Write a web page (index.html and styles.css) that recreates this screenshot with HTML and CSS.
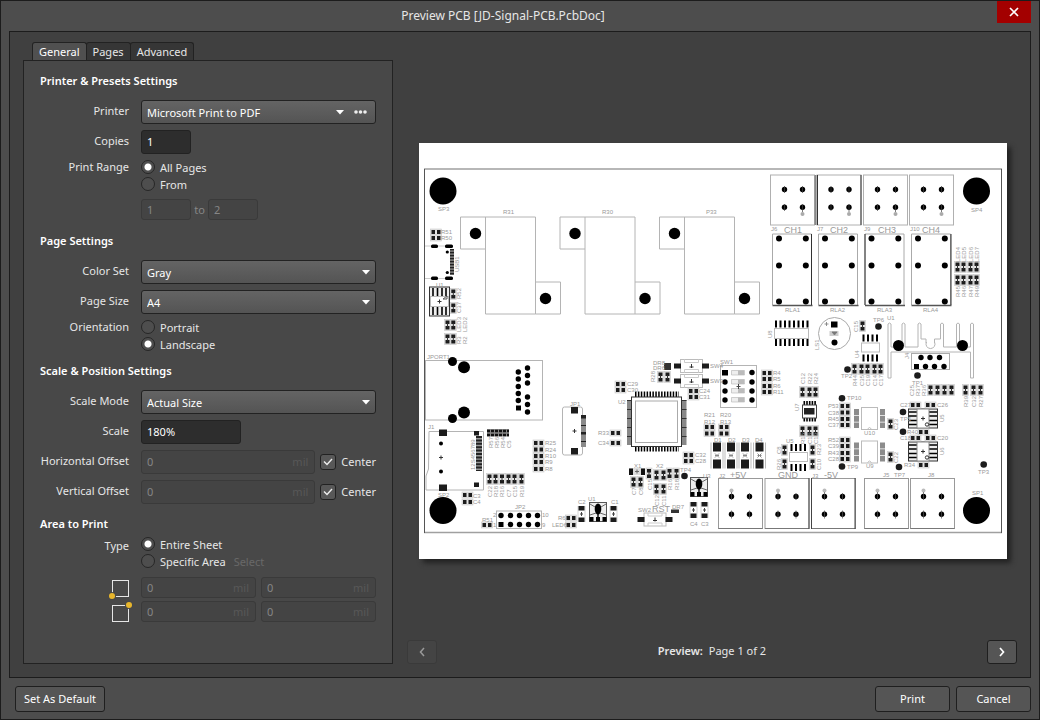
FILE: index.html
```html
<!DOCTYPE html>
<html lang="en">
<head>
<meta charset="utf-8">
<title>Preview PCB [JD-Signal-PCB.PcbDoc]</title>
<link rel="stylesheet" href="styles.css">
</head>
<body>
<div class="dialog">
  <header class="titlebar">
    <h1 class="title">Preview PCB [JD-Signal-PCB.PcbDoc]</h1>
    <button class="close" type="button" aria-label="Close"><svg width="10" height="10" viewBox="0 0 10 10"><path d="M1 1l8 8M9 1l-8 8" stroke="#fff" stroke-width="1.7"/></svg></button>
  </header>

  <main class="content">
    <form class="settings">
      <div class="tabs" role="tablist">
        <button class="tab active" type="button" role="tab" aria-selected="true">General</button>
        <button class="tab" type="button" role="tab" aria-selected="false">Pages</button>
        <button class="tab" type="button" role="tab" aria-selected="false">Advanced</button>
      </div>
      <div class="panel">
        <section class="section">
          <h2 class="heading">Printer &amp; Presets Settings</h2>
          <div class="rows">
            <label class="label" for="printer">Printer</label>
            <div class="combo with-more">
              <select id="printer" class="select"><option>Microsoft Print to PDF</option></select>
              <svg class="caret" width="8" height="5" viewBox="0 0 8 5"><path d="M0 0h8L4 4.5z" fill="#fff"/></svg>
              <button class="more" type="button" aria-label="Printer options"><svg width="13" height="4" viewBox="0 0 13 4"><g fill="#eee"><circle cx="2" cy="2" r="1.8"/><circle cx="6.5" cy="2" r="1.8"/><circle cx="11" cy="2" r="1.8"/></g></svg></button>
            </div>
            <label class="label" for="copies">Copies</label>
            <input id="copies" class="field w50" value="1">
            <span class="label top" id="range">Print Range</span>
            <div class="radios" role="radiogroup" aria-labelledby="range">
              <label class="choice"><input class="radio" type="radio" name="range" checked>All Pages</label>
              <label class="choice"><input class="radio" type="radio" name="range">From</label>
              <div class="fromto">
                <input class="field low w50" value="1" aria-label="From page" disabled>
                <span>to</span>
                <input class="field low w50" value="2" aria-label="To page" disabled>
              </div>
            </div>
          </div>
        </section>

        <section class="section">
          <h2 class="heading">Page Settings</h2>
          <div class="rows">
            <label class="label" for="colorset">Color Set</label>
            <div class="combo"><select id="colorset" class="select"><option>Gray</option></select><svg class="caret" width="8" height="5" viewBox="0 0 8 5"><path d="M0 0h8L4 4.5z" fill="#fff"/></svg></div>
            <label class="label" for="pagesize">Page Size</label>
            <div class="combo"><select id="pagesize" class="select"><option>A4</option></select><svg class="caret" width="8" height="5" viewBox="0 0 8 5"><path d="M0 0h8L4 4.5z" fill="#fff"/></svg></div>
            <span class="label top" id="orient">Orientation</span>
            <div class="radios" role="radiogroup" aria-labelledby="orient">
              <label class="choice"><input class="radio" type="radio" name="orient">Portrait</label>
              <label class="choice"><input class="radio" type="radio" name="orient" checked>Landscape</label>
            </div>
          </div>
        </section>

        <section class="section close-up">
          <h2 class="heading">Scale &amp; Position Settings</h2>
          <div class="rows">
            <label class="label" for="mode">Scale Mode</label>
            <div class="combo"><select id="mode" class="select"><option>Actual Size</option></select><svg class="caret" width="8" height="5" viewBox="0 0 8 5"><path d="M0 0h8L4 4.5z" fill="#fff"/></svg></div>
            <label class="label" for="scale">Scale</label>
            <input id="scale" class="field w100" value="180%">
            <label class="label" for="hoff">Horizontal Offset</label>
            <div class="offset">
              <div class="unit-field"><input id="hoff" class="field" value="0" disabled><span class="unit">mil</span></div>
              <label class="center"><input class="check" type="checkbox" checked><svg class="tick" width="10" height="8" viewBox="0 0 10 8"><path d="M1 3.5l3 3L9 1" fill="none" stroke="#eee" stroke-width="1.4"/></svg>Center</label>
            </div>
            <label class="label" for="voff">Vertical Offset</label>
            <div class="offset">
              <div class="unit-field"><input id="voff" class="field" value="0" disabled><span class="unit">mil</span></div>
              <label class="center"><input class="check" type="checkbox" checked><svg class="tick" width="10" height="8" viewBox="0 0 10 8"><path d="M1 3.5l3 3L9 1" fill="none" stroke="#eee" stroke-width="1.4"/></svg>Center</label>
            </div>
          </div>
        </section>

        <section class="section close-up area">
          <h2 class="heading">Area to Print</h2>
          <div class="rows">
            <span class="label type" id="type">Type</span>
            <div class="radios" role="radiogroup" aria-labelledby="type">
              <label class="choice"><input class="radio" type="radio" name="area" checked>Entire Sheet</label>
              <div class="specific">
                <label class="choice"><input class="radio" type="radio" name="area">Specific Area</label>
                <button class="pick" type="button" disabled>Select</button>
              </div>
            </div>
          </div>
          <div class="corners">
            <svg class="corner" width="22" height="45" viewBox="0 0 22 45">
              <rect x="4.5" y="3.5" width="16" height="16" fill="none" stroke="#e6e6e6"/>
              <circle cx="4" cy="19" r="4" fill="#484848"/><circle cx="4" cy="19" r="3" fill="#e8b62c"/>
              <rect x="4.5" y="28.5" width="16" height="16" fill="none" stroke="#e6e6e6"/>
              <circle cx="21" cy="28" r="4" fill="#484848"/><circle cx="21" cy="28" r="3" fill="#e8b62c"/>
            </svg>
            <div class="coords">
              <div class="unit-field"><input class="field low" value="0" aria-label="Lower left X" disabled><span class="unit">mil</span></div>
              <div class="unit-field"><input class="field low" value="0" aria-label="Lower left Y" disabled><span class="unit">mil</span></div>
              <div class="unit-field"><input class="field low" value="0" aria-label="Upper right X" disabled><span class="unit">mil</span></div>
              <div class="unit-field"><input class="field low" value="0" aria-label="Upper right Y" disabled><span class="unit">mil</span></div>
            </div>
          </div>
        </section>
      </div>
    </form>

    <section class="preview">
      <div class="stage">
        <svg class="sheet" viewBox="419 143 588 416" role="img" aria-label="Board preview">
          <defs>
            <g id="rv"><rect x="-3" y="-5.5" width="6" height="11" fill="#e4e4e4" stroke="#c8c8c8" stroke-width=".6"/><path d="M-2-4.500h4v3.500h-4zM-2 1h4v3.500h-4z" fill="#1c1c1c"/><path d="M0-2v4" stroke="#333"/></g>
            <g id="rh"><rect x="-5.5" y="-3" width="11" height="6" fill="#e4e4e4" stroke="#c8c8c8" stroke-width=".6"/><path d="M-4.500-2h3.500v4h-3.500zM1-2h3.500v4H1z" fill="#1c1c1c"/></g>
            <g id="cap"><path d="M-3.500-8v16M3.500-8v16" stroke="#ccc" stroke-width=".8"/><path d="M-3-8h6v4.500h-6zM-3 3.500h6V8h-6z" fill="#1c1c1c"/><path d="M-1.500 0h3M0-2v4" stroke="#444"/></g>
            <g id="shunt" stroke="#b4b4b4" stroke-width="1"><path d="M.500 0h75v97h-50V0M.500 0v32h25M75.500 65h25v32h-25" fill="none"/><g fill="#000" stroke="none"><circle cx="15.500" cy="16.500" r="5.7"/><circle cx="85.500" cy="81.500" r="5.7"/></g></g>
            <g id="pins4"><circle cx="14" cy="14.500" r="2.700"/><circle cx="32" cy="14.500" r="2.700"/><circle cx="14" cy="32.300" r="2.700"/><circle cx="32" cy="32.300" r="2.700"/></g>
            <g id="term"><rect width="44" height="50" fill="none" stroke="#b0b0b0"/><use href="#pins4"/><circle cx="32" cy="39" r="2" fill="#aaa"/><path d="M14 11v7M32 11v7M14 29v7M32 29v8" stroke="#444" stroke-width=".7"/></g>
            <g id="termb"><rect width="44" height="50" fill="none" stroke="#999"/><path d="M0 50h44" stroke="#777"/><use href="#pins4" x="-1" y="3.500"/><circle cx="13" cy="12" r="2" fill="#bbb"/><path d="M13 13.500v8M13 32v8M31 14.500v7M31 32v8" stroke="#555" stroke-width=".7"/></g>
            <g id="relay"><path d="M0 71V0h39v71" fill="none" stroke="#aaa"/><path d="M0 71.500h40" stroke="#555" stroke-width="1.500"/><circle cx="6.500" cy="4.500" r="3"/><circle cx="33.300" cy="4.500" r="3"/><circle cx="6.500" cy="31.500" r="3"/><circle cx="33.300" cy="31.500" r="3"/><circle cx="6.500" cy="67.500" r="3"/><circle cx="33.300" cy="67.500" r="3"/></g>
            <g id="so8"><path d="M-7-13v7M-2.500-13v7M2-13v7M6.500-13v7M-7 14v-7M-2.500 14v-7M2 14v-7M6.500 14v-7" stroke="#000" stroke-width="2"/><rect x="-9" y="-4.500" width="18" height="9" fill="#fff" stroke="#bbb"/></g>
            <g id="sot"><rect x="-8.500" y="-9.500" width="17" height="19" fill="#eee" stroke="#555"/><ellipse cy="-3" rx="3.300" ry="5.500"/><path d="M-8.500 5h4v4.500h-4zM-2 5h4v4.500h-4zM4.500 5h4v4.500h-4zM-.700 0h1.400v6h-1.400z"/><path d="M-8-8l5 3M8-8l-5 3M-8 3l6-2M8 3L2 1" stroke="#666"/></g>
            <g id="button"><rect x="-11" y="-6.500" width="22" height="13" fill="#fff" stroke="#bbb"/><path d="M-7-6.500v3H7v-3M-7 6.500v-3H7v3" fill="none" stroke="#ccc"/><path d="M-17.500-2.500h7v5h-7zM10.500-2.500h7v5h-7z" fill="#1c1c1c"/><path d="M-2 1h4M0-2v4" stroke="#333"/></g>
            <g id="diode"><path d="M-6-13v26M6-13v26" stroke="#bbb"/><path d="M-4-13h8v9h-8zM-4 4h8v9h-8z" fill="#1c1c1c"/><path d="M-2-2l4 4M2-2l-4 4M-2 0h4" stroke="#888"/></g>
            <g id="opto"><rect x="-8" y="-11" width="16" height="22" fill="#fff" stroke="#bbb"/><path d="M-2 10.500q2-3 4 0" fill="none" stroke="#bbb"/><path d="M-13-9.500v19M13-9.500v19" stroke="#8c8c8c" stroke-width="5" stroke-dasharray="6 .8"/></g>
            <g id="amp"><rect x="-14.500" y="-9.500" width="29" height="19" fill="#eee" stroke="#333"/><path d="M-14-6.500h8M-14-2.500h8M-14 2h8M-14 6h8M6-6.500h8M6-2.500h8M6 2h8M6 6h8" stroke="#000" stroke-width="1.400"/><rect x="-6" y="-9.500" width="12" height="19" fill="#fff" stroke="#888"/><path d="M-2 0h4M0-2v4" stroke="#333"/><circle cx="4" cy="6" r="1.700" fill="none" stroke="#333"/></g>
            <circle id="tp" r="3.300" fill="#1c1c1c"/>
            <circle id="pin" r="2.700"/>
            <circle id="hole" r="13.500"/>
          </defs>
          <rect x="419" y="143" width="588" height="416" fill="#fff"/>
          <path d="M424 169h578M424 532.500h578" stroke="#a0a0a0" stroke-width="1.600"/>
          <path d="M424.500 169v364M1001.500 169v364" stroke="#555"/>
          <use href="#hole" x="443" y="191"/><use href="#hole" x="976.500" y="191"/><use href="#hole" x="443" y="510.500"/><use href="#hole" x="976.500" y="510.500"/>
          <use href="#shunt" x="460" y="217"/><use href="#shunt" x="559.500" y="217"/><use href="#shunt" x="659" y="217"/>

          <g><use href="#term" x="770.500" y="175"/><use href="#term" x="817" y="175"/><use href="#term" x="863.500" y="175"/><use href="#term" x="909.500" y="175"/>
          <path d="M815.500 175v50" stroke="#888" stroke-width="2"/><path d="M817.500 175v50M861 175v50" stroke="#333"/></g>
          <g><use href="#relay" x="772.500" y="234"/><use href="#relay" x="818.500" y="234"/><use href="#relay" x="865" y="234"/><use href="#relay" x="911.500" y="234"/>
          <path d="M811.500 234v71M865 234v71M951 234v71" stroke="#333"/></g>
          <g><use href="#termb" x="718.500" y="478.500"/><use href="#termb" x="765" y="478.500"/><use href="#termb" x="811.500" y="478.500"/><use href="#termb" x="864.500" y="478.500"/><use href="#termb" x="910.500" y="478.500"/>
          <path d="M809 478v51M811.500 478v51M855 478v51" stroke="#444"/></g>

          <!-- USB connector -->
          <path d="M425 246h28M425 278.500h28" stroke="#ccc"/>
          <g><rect x="431" y="244.500" width="7" height="3.500" rx="1.500"/><rect x="445" y="244.500" width="8" height="3.500" rx="1.500"/><rect x="431" y="276.500" width="7" height="3.500" rx="1.500"/><rect x="445" y="276.500" width="8" height="3.500" rx="1.500"/><circle cx="447.300" cy="252" r="1.600"/><circle cx="447.300" cy="272.500" r="1.600"/></g>
          <path d="M452 249v26" stroke="#777" stroke-width="4"/><path d="M452 249v26" stroke="#222" stroke-width="4" stroke-dasharray="1.200 1.800"/>
          <rect x="429.500" y="287" width="20" height="29" fill="#eee" stroke="#333"/>
          <path d="M433 288v8M437.500 288v8M442 288v8M446 288v8M433 307v8M437.500 307v8M442 307v8M446 307v8" stroke="#000" stroke-width="1.600"/>
          <rect x="430.500" y="296.500" width="18" height="10" fill="#fff" stroke="#bbb"/><path d="M437.500 301.500h4M439.500 299.500v4" stroke="#333"/><path d="M443 299h4v-3z" fill="none" stroke="#555"/>

          <!-- Ethernet jack -->
          <rect x="425.500" y="360.500" width="117" height="59.500" fill="none" stroke="#b4b4b4"/>
          <circle cx="452.500" cy="361.500" r="4.500"/><circle cx="464" cy="367.300" r="6"/><circle cx="464" cy="412.500" r="6"/><circle cx="452.500" cy="418.500" r="4.500"/>
          <path d="M516 405.500h5v5h-5z"/><use href="#pin" x="518.300" y="372"/><use href="#pin" x="518.300" y="379"/><use href="#pin" x="518.300" y="386.500"/><use href="#pin" x="518.300" y="393.500"/><use href="#pin" x="518.300" y="400.500"/>
          <use href="#pin" x="527.500" y="368"/><use href="#pin" x="527.500" y="375.500"/><use href="#pin" x="527.500" y="383"/><use href="#pin" x="527.500" y="397"/><use href="#pin" x="527.500" y="404.500"/><use href="#pin" x="527.500" y="412"/>

          <!-- Card slot -->
          <path d="M429 431.500h54.500V490H426v-14l2.500-7z" fill="none" stroke="#b4b4b4"/>
          <path d="M439 429.500h8v6.500h-8zM474 431h5v4.500h-5zM439 484.500h8v6.500h-8zM474 482.500h5v4.500h-5z" fill="#1c1c1c"/>
          <circle cx="441" cy="443.500" r="2"/><circle cx="441" cy="471.500" r="2"/><path d="M439 457.500h4M441 455.500v4" stroke="#333"/>
          <path d="M479 436v35" stroke="#999" stroke-width="6"/><path d="M479 436v35" stroke="#222" stroke-width="6" stroke-dasharray="2 1.400"/>
          <path d="M487 429h22v7.500h-22z" fill="#888"/><path d="M487 431h22M487 435h22" stroke="#111" stroke-width="2.600" stroke-dasharray="3 1"/>

          <!-- Side header -->
          <rect x="562.500" y="407" width="20" height="48" rx="2" fill="none" stroke="#b4b4b4"/><path d="M571 407h7v6.500h-7zM571 448h7v6.500h-7z" fill="#1c1c1c"/>
          <path d="M581 415h5v32h-5z" fill="#8a8a8a"/><path d="M581 415h5v3.500h-5zM581 425h5v1h-5zM581 432h5v2.500h-5zM581 441h5v1h-5z" fill="#222"/><path d="M572.500 431h4M574.500 429v4" stroke="#333"/>
          <rect x="496.500" y="511" width="45" height="17.500" fill="none" stroke="#b4b4b4"/>
          <g><use href="#pin" x="501" y="515.500"/><use href="#pin" x="510.500" y="515.500"/><use href="#pin" x="519.500" y="515.500"/><use href="#pin" x="528.500" y="515.500"/><use href="#pin" x="537.500" y="515.500"/><path d="M498.500 522h5v5h-5z"/><use href="#pin" x="510.500" y="524.500"/><use href="#pin" x="519.500" y="524.500"/><use href="#pin" x="528.500" y="524.500"/><use href="#pin" x="537.500" y="524.500"/></g>

          <!-- Microcontroller -->
          <path d="M635 394.500h44M635 448.500h44" stroke="#000" stroke-width="6" stroke-dasharray="1.500 1.400"/>
          <path d="M629.500 400v45M684 400v45" stroke="#888" stroke-width="5"/><path d="M629.500 400v45M684 400v45" stroke="#333" stroke-width="5" stroke-dasharray="1 8"/>
          <rect x="631.500" y="397" width="50" height="49.500" fill="#fff" stroke="#333"/><rect x="635.500" y="401" width="42" height="41.500" fill="none" stroke="#aaa"/>

          <use href="#button" x="691.500" y="366"/><use href="#button" x="691.500" y="381"/><use href="#button" x="655" y="519.500"/>
          <use href="#sot" x="598" y="512"/><use href="#sot" x="699" y="487"/>
          <use href="#cap" x="581.500" y="514"/><use href="#cap" x="613.500" y="514"/><use href="#cap" x="693.500" y="510"/><use href="#cap" x="704.500" y="510"/>

          <!-- DIP switch -->
          <rect x="720.500" y="365.500" width="36" height="42" fill="none" stroke="#b4b4b4"/>
          <path d="M722 370h6v5.500h-6z"/><use href="#pin" x="725" y="382"/><use href="#pin" x="725" y="391"/><use href="#pin" x="725" y="400"/><use href="#pin" x="752" y="372.500"/><use href="#pin" x="752" y="382"/><use href="#pin" x="752" y="391"/><use href="#pin" x="752" y="400"/>
          <g fill="#eee" stroke="#bbb" stroke-width=".7"><path d="M731.500 370.500h13v4.500h-13zM731.500 379.500h13v4.500h-13zM731.500 388.500h13v4.500h-13zM731.500 397.500h13v4.500h-13z"/></g><path d="M738 370.500h6v4.500h-6zM738 379.500h6v4.500h-6zM738 388.500h6v4.500h-6zM738 397.500h6v4.500h-6z" fill="#bbb"/><path d="M736.500 386.500h4M738.500 384v5" stroke="#444"/>

          <use href="#diode" x="717" y="455.500"/><use href="#diode" x="731" y="455.500"/><use href="#diode" x="745" y="455.500"/><use href="#diode" x="759.500" y="455.500"/>

          <!-- Shift register and buzzer -->
          <path d="M775 324h34M775 342.500h34" stroke="#000" stroke-width="7" stroke-dasharray="2 2.500"/><rect x="774.500" y="328.500" width="34" height="10" fill="#fff" stroke="#bbb"/>
          <circle cx="834.500" cy="333.500" r="16" fill="none" stroke="#aaa"/><path d="M831 321.500h6.500v6h-6.500z"/><circle cx="834.500" cy="342.500" r="3"/><path d="M829.500 331h9v5h-9z" fill="#ccc"/><path d="M832 332h5l-2.500 3zM824.500 324h4M826.500 322v4" stroke="#777" fill="#777" stroke-width=".8"/>
          <use href="#so8" x="870.500" y="347.500"/><use href="#so8" x="798.500" y="457"/>

          <!-- Heat sink and D-sub header -->
          <path d="M888 378V324q1.500-2 3 0v23h11v-23q1.500-2 3 0v23h13v-23q1.500-2 3 0v15h5v4M973.500 378V324q-1.500-2-3 0v23h-11v-23q-1.500-2-3 0v23h-13v-23q-1.500-2-3 0v15h-6v4M926.500 342a4.500 4.500 0 1 0 8 0M888 378h3v-26h79.500v26h3" fill="none" stroke="#b4b4b4"/>
          <circle cx="898.500" cy="345.500" r="5.500"/><circle cx="962.500" cy="345.500" r="5.500"/>
          <rect x="911.500" y="353.500" width="38" height="16" fill="#fff" stroke="#aaa"/><use href="#pin" x="921" y="357.500"/><use href="#pin" x="930" y="357.500"/><use href="#pin" x="939.500" y="357.500"/><path d="M914 364h5v5h-5z"/><use href="#pin" x="925.500" y="366.500"/><use href="#pin" x="934.500" y="366.500"/><use href="#pin" x="944" y="366.500"/>

          <path d="M803.500 403.500h13M803.500 419h13" stroke="#000" stroke-width="5" stroke-dasharray="1.600 1.100"/><rect x="802.500" y="405" width="14" height="13" fill="#fff" stroke="#444"/><path d="M804 408h10.500v6.500H804z" fill="#222"/>
          <use href="#opto" x="869.500" y="418.500"/><use href="#opto" x="869.500" y="452"/>
          <use href="#amp" x="923" y="418.500"/><use href="#amp" x="923" y="451.500"/>

          <g><use href="#tp" x="878.500" y="326.500"/><use href="#tp" x="847.500" y="369.500"/><use href="#tp" x="917.500" y="375.500"/><use href="#tp" x="842" y="398.300"/><use href="#tp" x="903" y="412"/><use href="#tp" x="903" y="431.700"/><use href="#tp" x="842" y="466.500"/><use href="#tp" x="899" y="467"/><use href="#tp" x="983.700" y="464.500"/><use href="#tp" x="684.500" y="476"/></g>

          <!-- Upright passives -->
          <g><use href="#rv" x="453.300" y="294"/><use href="#rv" x="453.300" y="308"/><use href="#rv" x="447.500" y="325"/><use href="#rv" x="453.300" y="325"/><use href="#rv" x="447.500" y="339"/><use href="#rv" x="453.300" y="339"/>
          <use href="#rv" x="489.500" y="479"/><use href="#rv" x="495.500" y="479"/><use href="#rv" x="502" y="479"/><use href="#rv" x="508.500" y="479"/><use href="#rv" x="514.500" y="479"/><use href="#rv" x="521.500" y="479"/>
          <use href="#rv" x="660.500" y="377"/><use href="#rv" x="667.500" y="377"/><use href="#rv" x="633.500" y="482"/><use href="#rv" x="640.500" y="482"/><use href="#rv" x="649" y="473.500"/><use href="#rv" x="656.500" y="475"/><use href="#rv" x="663.500" y="475"/><use href="#rv" x="669.500" y="473.500"/><use href="#rv" x="676.500" y="473.500"/><use href="#rv" x="656.500" y="489"/><use href="#rv" x="663.500" y="489"/>
          <use href="#rv" x="957.500" y="267"/><use href="#rv" x="963.500" y="267"/><use href="#rv" x="970.500" y="267"/><use href="#rv" x="976.500" y="267"/><use href="#rv" x="957.500" y="280"/><use href="#rv" x="963.500" y="280"/><use href="#rv" x="970.500" y="280"/><use href="#rv" x="976.500" y="280"/><use href="#rv" x="862.500" y="326"/>
          <use href="#rv" x="854.500" y="369"/><use href="#rv" x="861.500" y="369"/><use href="#rv" x="867.500" y="369"/><use href="#rv" x="874.500" y="369"/><use href="#rv" x="880.500" y="369"/>
          <use href="#rv" x="930.500" y="390"/><use href="#rv" x="937.500" y="390"/><use href="#rv" x="944.500" y="390"/><use href="#rv" x="951.500" y="390"/><use href="#rv" x="965.500" y="390"/><use href="#rv" x="973.500" y="390"/><use href="#rv" x="980.500" y="390"/>
          <use href="#rv" x="802.500" y="392"/><use href="#rv" x="809.500" y="392"/><use href="#rv" x="815.500" y="392"/><use href="#rv" x="802.500" y="431"/><use href="#rv" x="809.500" y="431"/><use href="#rv" x="815.500" y="431"/>
          <use href="#rv" x="784.500" y="450"/><use href="#rv" x="784.500" y="464"/><use href="#rv" x="812.500" y="450"/><use href="#rv" x="812.500" y="464"/><use href="#rv" x="890.500" y="424"/><use href="#rv" x="890.500" y="457"/></g>

          <!-- Flat passives -->
          <g><use href="#rh" x="436" y="232"/><use href="#rh" x="436" y="238"/><use href="#rh" x="538.500" y="443"/><use href="#rh" x="538.500" y="449.500"/><use href="#rh" x="538.500" y="456"/><use href="#rh" x="538.500" y="462"/><use href="#rh" x="538.500" y="469"/>
          <use href="#rh" x="467.500" y="495"/><use href="#rh" x="467.500" y="502"/><use href="#rh" x="487" y="525"/><use href="#rh" x="571" y="518"/><use href="#rh" x="571" y="525"/>
          <use href="#rh" x="620.500" y="384"/><use href="#rh" x="620.500" y="390"/><use href="#rh" x="693.500" y="391"/><use href="#rh" x="693.500" y="397"/><use href="#rh" x="615.500" y="433"/><use href="#rh" x="615.500" y="443"/>
          <use href="#rh" x="767" y="373"/><use href="#rh" x="767" y="379"/><use href="#rh" x="767" y="386"/><use href="#rh" x="767" y="392"/><use href="#rh" x="709.500" y="427"/><use href="#rh" x="709.500" y="433.500"/><use href="#rh" x="724" y="427"/><use href="#rh" x="724" y="433.500"/><use href="#rh" x="688.500" y="455"/><use href="#rh" x="688.500" y="461"/>
          <use href="#rh" x="845" y="406"/><use href="#rh" x="845" y="412.500"/><use href="#rh" x="845" y="419"/><use href="#rh" x="845" y="425"/><use href="#rh" x="845" y="440"/><use href="#rh" x="845" y="446"/><use href="#rh" x="845" y="453"/><use href="#rh" x="845" y="459"/>
          <use href="#rh" x="915.500" y="405"/><use href="#rh" x="930.500" y="405"/><use href="#rh" x="923.500" y="432"/><use href="#rh" x="915.500" y="438"/><use href="#rh" x="930.500" y="438"/><use href="#rh" x="923.500" y="465"/></g>
          <path d="M664 363h7v7h-7zM671 509.500h8v3.500h-8z" fill="#333"/><path d="M629 468h16v7h-16z" fill="#ddd"/><path d="M629 468.500h4v6.500h-4zM641 468.500h4v6.500h-4z" fill="#111"/><path d="M635 471.500h4M637 469.500v4" stroke="#666"/>

          <!-- Silkscreen -->
          <g class="silk">
            <text x="438" y="211">SP3</text><text x="971" y="212">SP4</text><text x="972" y="495">SP1</text><text x="438" y="497">SP2</text>
            <text x="503" y="214">R31</text><text x="602" y="214">R30</text><text x="706" y="214">P33</text>
            <text x="441" y="234">R51</text><text x="441" y="240">R50</text><text x="436" y="287">U1</text>
            <text x="427" y="359">JPORT1</text><text x="428" y="429">J1</text><text x="570" y="406">JP1</text><text x="515" y="509">JP2</text>
            <text x="545" y="445">R25</text><text x="545" y="452">R24</text><text x="545" y="458">R10</text><text x="545" y="464">R9</text><text x="545" y="471">R8</text>
            <text x="473" y="498">C3</text><text x="473" y="504">C4</text><text x="482" y="522">R51</text><text x="558" y="520">R6</text><text x="552" y="527">LED6</text><text x="578" y="504">C2</text><text x="588" y="501">U1</text><text x="611" y="504">C1</text>
            <text x="493" y="517">2</text><text x="493" y="527">1</text><text x="542" y="517">10</text><text x="542" y="527">9</text>
            <text x="618" y="404">U2</text><text x="627" y="386">C29</text><text x="627" y="392">C30</text><text x="598" y="435">R33</text><text x="598" y="445">C34</text><text x="699" y="393">C24</text><text x="699" y="399">C31</text>
            <text x="710" y="368">SW4</text><text x="710" y="383">SW3</text><text x="720" y="364">SW1</text><text x="773" y="375">R4</text><text x="773" y="381">R5</text><text x="773" y="388">R6</text><text x="773" y="394">R11</text><text x="653" y="365">DR8</text><text x="653" y="370">DR6</text>
            <text x="704" y="417">R21</text><text x="720" y="417">R20</text><text x="704" y="424">R12</text><text x="720" y="424">R13</text><text x="714" y="442">D1</text><text x="728" y="442">D2</text><text x="742" y="442">D3</text><text x="755" y="442">D4</text><text x="695" y="457">C32</text><text x="695" y="463">C28</text>
            <text x="634" y="468">X1</text><text x="656" y="468">X2</text><text x="680" y="472">TP4</text><text x="703" y="478">U3</text><text x="638" y="512">SW2</text><text x="672" y="509">DR7</text><text x="690" y="526">C4</text><text x="701" y="526">C3</text><text x="719" y="478">J2</text><text x="812" y="478">J3</text>
            <text x="771" y="231">J6</text><text x="817" y="231">J7</text><text x="864" y="231">J9</text><text x="910" y="231">J10</text><text x="785" y="312">RLA1</text><text x="830" y="312">RLA2</text><text x="877" y="312">RLA3</text><text x="923" y="312">RLA4</text>
            <text x="873" y="322">TP6</text><text x="887" y="320">U1</text><text x="841" y="378">TP2</text><text x="912" y="385">TP1</text><text x="847" y="400">TP10</text><text x="847" y="469">TP9</text><text x="978" y="474">TP3</text><text x="894" y="477">TP7</text><text x="900" y="421">TP5</text>
            <text x="828" y="408">P53</text><text x="828" y="415">C38</text><text x="828" y="421">R45</text><text x="828" y="427">C37</text><text x="828" y="442">R52</text><text x="828" y="448">C39</text><text x="828" y="455">R43</text><text x="828" y="461">C28</text>
            <text x="864" y="435">U10</text><text x="866" y="468">U9</text><text x="900" y="407">C27</text><text x="937" y="407">C26</text><text x="907" y="434">R40</text><text x="900" y="440">C18</text><text x="937" y="440">C20</text><text x="904" y="467">R34</text><text x="883" y="477">J5</text><text x="928" y="477">J8</text><text x="786" y="443">U5</text>
            <g class="wide"><text x="784" y="233">CH1</text><text x="830" y="233">CH2</text><text x="878" y="233">CH3</text><text x="922" y="233">CH4</text><text x="730" y="478">+5V</text><text x="778" y="478">GND</text><text x="824" y="478">-5V</text><text x="652" y="512">RST</text></g>
            <g class="turned">
              <text transform="translate(459 272) rotate(-90)">USB1</text><text transform="translate(461 299) rotate(-90)">R52</text><text transform="translate(461 313) rotate(-90)">C37</text><text transform="translate(461 332) rotate(-90)">LED3</text><text transform="translate(467 332) rotate(-90)">LED2</text><text transform="translate(461 344) rotate(-90)">R3</text><text transform="translate(467 344) rotate(-90)">R2</text>
              <text transform="translate(492 497) rotate(-90)">C22</text><text transform="translate(498 497) rotate(-90)">R18</text><text transform="translate(504 497) rotate(-90)">R16</text><text transform="translate(511 497) rotate(-90)">C7</text><text transform="translate(517 497) rotate(-90)">C15</text><text transform="translate(524 497) rotate(-90)">R19</text>
              <text transform="translate(475 470) rotate(-90)">12S456789</text><text transform="translate(493 448) rotate(-90)">R57</text><text transform="translate(499 448) rotate(-90)">R56</text><text transform="translate(505 448) rotate(-90)">R54</text><text transform="translate(511 448) rotate(-90)">C5</text>
              <text transform="translate(636 495) rotate(-90)">C7</text><text transform="translate(643 495) rotate(-90)">C8</text><text transform="translate(652 490) rotate(-90)">C15</text><text transform="translate(672 490) rotate(-90)">R16</text><text transform="translate(679 490) rotate(-90)">R18</text><text transform="translate(659 506) rotate(-90)">C12</text><text transform="translate(666 506) rotate(-90)">C11</text><text transform="translate(655 382) rotate(-90)">R28</text>
              <text transform="translate(960 262) rotate(-90)">LED4</text><text transform="translate(966 262) rotate(-90)">LED5</text><text transform="translate(973 262) rotate(-90)">LED6</text><text transform="translate(979 262) rotate(-90)">LED7</text><text transform="translate(960 297) rotate(-90)">R45</text><text transform="translate(966 297) rotate(-90)">R46</text><text transform="translate(973 297) rotate(-90)">R47</text><text transform="translate(979 297) rotate(-90)">R49</text>
              <text transform="translate(772 338) rotate(-90)">U8</text><text transform="translate(819 350) rotate(-90)">LS1</text><text transform="translate(858 332) rotate(-90)">C15</text><text transform="translate(859 358) rotate(-90)">U4</text><text transform="translate(857 386) rotate(-90)">R44</text><text transform="translate(864 386) rotate(-90)">C35</text><text transform="translate(870 386) rotate(-90)">C19</text><text transform="translate(877 386) rotate(-90)">C14</text><text transform="translate(883 386) rotate(-90)">C17</text>
              <text transform="translate(805 384) rotate(-90)">C12</text><text transform="translate(812 384) rotate(-90)">R22</text><text transform="translate(818 384) rotate(-90)">R24</text><text transform="translate(805 444) rotate(-90)">R15</text><text transform="translate(812 444) rotate(-90)">C18</text><text transform="translate(818 444) rotate(-90)">C13</text><text transform="translate(799 411) rotate(-90)">U7</text><text transform="translate(781 454) rotate(-90)">C8</text><text transform="translate(781 470) rotate(-90)">R26</text><text transform="translate(821 455) rotate(-90)">R23</text><text transform="translate(821 470) rotate(-90)">C10</text>
              <text transform="translate(914 396) rotate(-90)">C25</text><text transform="translate(920 396) rotate(-90)">R37</text><text transform="translate(926 396) rotate(-90)">R36</text><text transform="translate(968 407) rotate(-90)">R39</text><text transform="translate(976 407) rotate(-90)">C32</text><text transform="translate(983 407) rotate(-90)">R27</text><text transform="translate(898 430) rotate(-90)">C23</text><text transform="translate(898 463) rotate(-90)">C22</text><text transform="translate(944 422) rotate(-90)">U5</text><text transform="translate(944 455) rotate(-90)">U6</text><text transform="translate(909 359) rotate(-90)">J4</text>
            </g>
          </g>
        </svg>
      </div>
      <nav class="pager">
        <button class="step" type="button" aria-label="Previous page" disabled><svg width="8" height="10" viewBox="0 0 8 10"><path d="M6 1L2.500 5 6 9" fill="none" stroke="#999" stroke-width="1.500"/></svg></button>
        <p class="page"><b>Preview:</b> Page 1 of 2</p>
        <button class="step" type="button" aria-label="Next page"><svg width="8" height="10" viewBox="0 0 8 10"><path d="M2 1l3.500 4L2 9" fill="none" stroke="#fff" stroke-width="1.700"/></svg></button>
      </nav>
    </section>
  </main>

  <footer class="footer">
    <button class="button wide-button" type="button">Set As Default</button>
    <button class="button" type="button">Print</button>
    <button class="button" type="button">Cancel</button>
  </footer>
</div>
</body>
</html>
```

FILE: styles.css
```css
* { box-sizing: border-box; }

body {
  margin: 0;
  background: #4d4d4d;
  color: #e6e6e6;
  font: 11px/16px "Noto Sans", "Open Sans", sans-serif;
}

button, input, select { font: inherit; color: inherit; margin: 0; }
h1, h2, p { margin: 0; }
svg { display: block; }

.dialog {
  display: flex;
  flex-direction: column;
  min-height: 100vh;
  border: 1px solid #1c1c1c;
  background: #4d4d4d;
}

.titlebar { display: flex; align-items: flex-start; padding: 0 8px; height: 30px; }
.title { flex: 1; text-align: center; font-size: 12px; line-height: 30px; font-weight: 400; }
.close { display: grid; place-items: center; width: 34px; height: 22px; border: 0; padding: 0; background: #a30000; }

.content { flex: 1; display: flex; margin: 0 8px; border: 1px solid #1c1c1c; background: #404040; }

.settings { display: flex; flex-direction: column; width: 383px; padding: 10px 0 13px 13px; }
.tabs { display: flex; padding-left: 9px; }
.tab {
  height: 18px;
  padding: 0 6px;
  border: 1px solid #222;
  border-bottom: 0;
  border-radius: 3px 3px 0 0;
  background: #363636;
  line-height: 18px;
}
.tab + .tab { margin-left: -1px; }
.tab.active { background: #505050; color: #fff; }

.panel { flex: 1; padding: 9px 16px; border: 1px solid #222; background: #484848; }
.section + .section { margin-top: 10px; }
.section + .close-up { margin-top: 9px; }
.heading { margin-bottom: 9px; font-size: 11px; line-height: 21px; font-weight: 600; color: #fff; }
.area .heading { margin-bottom: 3px; }

.rows { display: grid; grid-template-columns: 89px 1fr; gap: 6px 12px; }
.label { text-align: right; line-height: 21px; white-space: nowrap; }
.label.top { line-height: 13px; }
.label.type { line-height: 18px; }

.combo { display: grid; grid-template-columns: 1fr 20px; align-items: center; height: 24px; border: 1px solid #222; border-radius: 3px; background: linear-gradient(#646464, #545454); color: #fff; }
.combo.with-more { grid-template-columns: 1fr 20px 26px; }
.select {
  grid-area: 1 / 1 / 2 / -1;
  width: 100%;
  height: 22px;
  padding: 2px 5px 0;
  border: 0;
  background: transparent;
  appearance: none;
}
.caret { grid-area: 1 / 2; pointer-events: none; margin-left: 7px; }
.more { grid-area: 1 / 3; padding: 0 0 0 5px; border: 0; background: none; }

.field { width: 100%; height: 24px; padding: 0 5px 1px; border: 1px solid #222; border-radius: 3px; background: #2d2d2d; color: #fff; }
.field:disabled { background: #444; border-color: #3a3a3a; color: #868686; }
.field.low { height: 21px; }
.field.w50 { width: 50px; }
.field.w100 { width: 100px; }

.radios { display: flex; flex-direction: column; gap: 3px; }
.choice { display: flex; align-items: flex-start; gap: 5px; height: 14px; line-height: 16px; white-space: nowrap; }
.radio { width: 14px; height: 14px; border: 1px solid #262626; border-radius: 50%; background: #4e4e4e; appearance: none; }
.radio:checked { background: radial-gradient(circle, #fff 3px, #4e4e4e 4px); }
.fromto { display: flex; align-items: center; justify-content: space-between; width: 117px; padding-top: 5px; color: #868686; }

.offset { display: flex; align-items: center; gap: 5px; }
.unit-field { flex: 1; display: grid; align-items: center; }
.unit-field .field, .unit { grid-area: 1 / 1; }
.unit { justify-self: end; padding-right: 7px; color: #585858; }
.center { display: grid; grid-template-columns: 16px auto; align-items: center; gap: 5px; line-height: 18px; }
.check { grid-area: 1 / 1; width: 16px; height: 16px; border: 1px solid #222; border-radius: 3px; background: #585858; appearance: none; }
.tick { grid-area: 1 / 1; justify-self: center; pointer-events: none; }

.specific { display: flex; gap: 8px; }
.pick { height: 14px; padding: 0; border: 0; background: none; line-height: 16px; color: #686868; }
.corners { display: flex; gap: 11px; margin-top: 9px; padding-left: 68px; }
.coords { flex: 1; display: grid; grid-template-columns: 1fr 1fr; gap: 3px 5px; }
.corner { flex: none; overflow: visible; }

.preview { flex: 1; display: flex; flex-direction: column; }
.stage { flex: 1; display: flex; align-items: center; padding: 30px 23px 0 26px; }
.sheet { width: 100%; box-shadow: 4px 4px 5px #222; }
.silk { font: 6px "Liberation Sans", sans-serif; fill: #999; }
.silk .wide { font-size: 9px; }

.pager { display: flex; align-items: center; justify-content: space-between; padding: 0 13px 13px 14px; }
.step { display: grid; place-items: center; width: 30px; height: 24px; padding: 0; border: 1px solid #1f1f1f; border-radius: 3px; background: #555; }
.step:disabled { background: #444; border-color: #3a3a3a; }
.page { line-height: 20px; padding-bottom: 3px; }
.page b { margin-right: 3px; font-weight: 600; }

.footer { display: flex; gap: 6px; padding: 8px 8px 7px 14px; }
.button { width: 75px; height: 26px; padding: 0; border: 1px solid #1f1f1f; border-radius: 3px; background: #555; color: #fff; }
.wide-button { width: 90px; margin-right: auto; }
```
